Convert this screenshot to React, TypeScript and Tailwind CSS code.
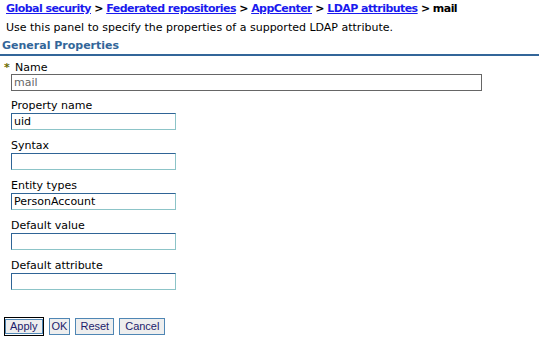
import React from "react";

const fields: { label: string; value: string }[] = [
  { label: "Property name", value: "uid" },
  { label: "Syntax", value: "" },
  { label: "Entity types", value: "PersonAccount" },
  { label: "Default value", value: "" },
  { label: "Default attribute", value: "" },
];

function Field({ label, value }: { label: string; value: string }) {
  return (
    <div className="flex flex-col">
      <div className="h-[16px] leading-[18px] text-[11px] text-[#000000]">{label}</div>
      <div className="w-[165px] h-[17px] border border-t-[#2f6496] border-l-[#2f6496] border-r-[#8cc4c8] border-b-[#8cc4c8] bg-white px-[2px] text-[11px] leading-[15px] text-black">
        {value}
      </div>
    </div>
  );
}

export default function App() {
  return (
    <div className="w-[539px] h-[344px] bg-white overflow-hidden font-['DejaVu_Sans',sans-serif] text-black">
      <div className="pl-[6px] pt-[2px] h-[16px] leading-[14px] text-[11px] font-bold whitespace-nowrap tracking-[-0.55px]">
        <a className="text-[#1a1aee] underline">Global security</a>
        <span> &gt; </span>
        <a className="text-[#1a1aee] underline">Federated repositories</a>
        <span> &gt; </span>
        <a className="text-[#1a1aee] underline">AppCenter</a>
        <span> &gt; </span>
        <a className="text-[#1a1aee] underline">LDAP attributes</a>
        <span> &gt; mail</span>
      </div>
      <div className="pl-[6px] mt-[4px] h-[16px] leading-[16px] text-[11px] whitespace-nowrap">
        Use this panel to specify the properties of a supported LDAP attribute.
      </div>
      <div className="mt-[2px] pl-[2px] h-[16px] leading-[16px] text-[11px] font-bold text-[#336699] border-b-2 border-[#336699] box-content">
        General Properties
      </div>
      <div className="pl-[11px] mt-[5px]">
        <div className="flex items-center h-[13px]">
          <span className="ml-[-7px] w-[10px] text-[11px] leading-[13px] text-[#6b6b00] font-bold">*</span>
          <span className="ml-[1px] text-[11px] leading-[13px]">Name</span>
        </div>
        <div className="w-[471px] h-[17px] border border-[#666666] bg-white px-[2px] text-[11px] leading-[15px] text-[#666666]">
          mail
        </div>
        <div className="mt-[6px] flex flex-col gap-[7px]">
          {fields.map((f) => (
            <Field key={f.label} label={f.label} value={f.value} />
          ))}
        </div>
      </div>
      <div className="mt-[27px] pl-[4px] flex items-center gap-[5px] font-['Liberation_Sans',sans-serif] text-[11px] text-[#1c1c6c]">
        <div className="border border-black">
          <button className="h-[15px] px-[4px] leading-[13px] bg-[#eeeeee] border border-[#4f86b4]">Apply</button>
        </div>
        <button className="h-[17px] px-[2px] leading-[15px] bg-[#eeeeee] border border-[#4f86b4]">OK</button>
        <button className="h-[17px] px-[4px] leading-[15px] bg-[#eeeeee] border border-[#4f86b4]">Reset</button>
        <button className="h-[17px] px-[5px] leading-[15px] bg-[#eeeeee] border border-[#4f86b4]">Cancel</button>
      </div>
    </div>
  );
}
